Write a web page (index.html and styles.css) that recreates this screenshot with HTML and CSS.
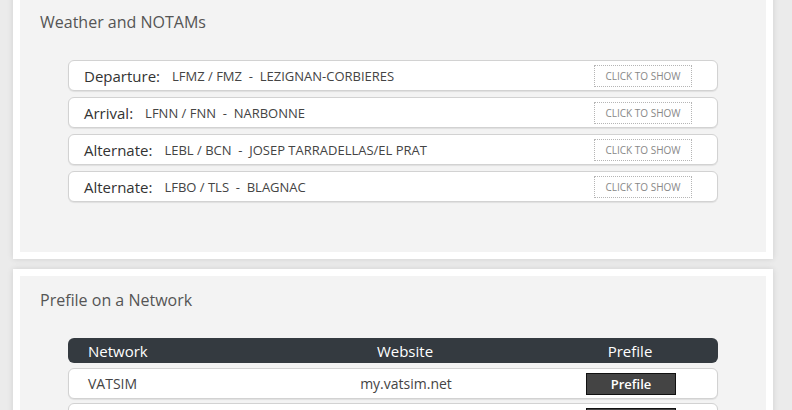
FILE: index.html
```html
<!DOCTYPE html>
<html lang="en">

<head>
    <meta charset="UTF-8">
    <title>Flight briefing</title>
    <link rel="stylesheet" href="styles.css">
</head>

<body>
    <!-- 天气和NOTAM -->
    <div class="card first">
        <h2 class="card-title">Weather and NOTAMs</h2>
        <ul class="airports">
            <li class="airport">
                <span class="role">Departure:</span>
                <span class="code">LFMZ / FMZ &nbsp;-&nbsp; LEZIGNAN-CORBIERES</span>
                <a href="javascript:;" class="show-btn">CLICK TO SHOW</a>
            </li>
            <li class="airport">
                <span class="role">Arrival:</span>
                <span class="code">LFNN / FNN &nbsp;-&nbsp; NARBONNE</span>
                <a href="javascript:;" class="show-btn">CLICK TO SHOW</a>
            </li>
            <li class="airport">
                <span class="role">Alternate:</span>
                <span class="code">LEBL / BCN &nbsp;-&nbsp; JOSEP TARRADELLAS/EL PRAT</span>
                <a href="javascript:;" class="show-btn">CLICK TO SHOW</a>
            </li>
            <li class="airport">
                <span class="role">Alternate:</span>
                <span class="code">LFBO / TLS &nbsp;-&nbsp; BLAGNAC</span>
                <a href="javascript:;" class="show-btn">CLICK TO SHOW</a>
            </li>
        </ul>
    </div>

    <!-- 网络预报 -->
    <div class="card">
        <h2 class="card-title">Prefile on a Network</h2>
        <div class="networks">
            <div class="net-row net-head">
                <div class="col-name">Network</div>
                <div class="col-site">Website</div>
                <div class="col-act">Prefile</div>
            </div>
            <div class="net-row">
                <div class="col-name">VATSIM</div>
                <div class="col-site">my.vatsim.net</div>
                <div class="col-act"><a href="javascript:;" class="prefile-btn">Prefile</a></div>
            </div>
            <div class="net-row">
                <div class="col-name">IVAO</div>
                <div class="col-site">fpl.ivao.aero</div>
                <div class="col-act"><a href="javascript:;" class="prefile-btn">Prefile</a></div>
            </div>
        </div>
    </div>
</body>

</html>
```

FILE: styles.css
```css
* {
    margin: 0;
    padding: 0;
    list-style-type: none;
    box-sizing: border-box;
}

body {
    background-color: #ebebeb;
    font-family: "Open Sans", "Liberation Sans", sans-serif;
    color: #333;
    overflow: hidden;
}

.card {
    width: 760px;
    margin: 10px 0 0 13px;
    border: 7px solid #fff;
    background-color: #f3f3f3;
    box-shadow: 0 0 6px rgba(0, 0, 0, 0.12);
    padding: 13px 20px 50px;
}

/* 页面是滚动过的 第一张卡片顶部被切掉 */
.card.first {
    margin-top: -9px;
}

.card-title {
    font-size: 16px;
    font-weight: normal;
    line-height: 22px;
    color: #555;
    margin-bottom: 27px;
}

.airports,
.networks {
    margin: 0 28px;
}

.airport {
    display: flex;
    align-items: center;
    height: 31px;
    margin-bottom: 6px;
    padding: 0 25px 0 15px;
    background-color: #fff;
    border: 1px solid #d2d2d2;
    border-radius: 6px;
    box-shadow: 0 1px 1px rgba(0, 0, 0, 0.08);
}

.airport:last-child {
    margin-bottom: 0;
}

.airport .role {
    font-size: 15px;
    color: #333;
    margin-right: 12px;
}

.airport .code {
    font-size: 13px;
    color: #444;
}

.show-btn {
    margin-left: auto;
    width: 98px;
    height: 22px;
    line-height: 20px;
    text-align: center;
    font-size: 10px;
    color: #888;
    text-decoration: none;
    border: 1px dotted #b5b5b5;
}

.net-row {
    display: grid;
    grid-template-columns: 200px 274px 176px;
    align-items: center;
    height: 31px;
    margin-bottom: 4px;
    background-color: #fff;
    border: 1px solid #d2d2d2;
    border-radius: 6px;
    box-shadow: 0 1px 1px rgba(0, 0, 0, 0.08);
    font-size: 14px;
    color: #444;
}

.net-row.net-head {
    height: 25px;
    margin-bottom: 5px;
    background-color: #343a40;
    border: none;
    border-radius: 6px;
    box-shadow: none;
    color: #fff;
    font-size: 15px;
}

.col-name {
    padding-left: 19px;
}

.col-site,
.col-act {
    text-align: center;
}

.net-head .col-name {
    padding-left: 20px;
}

.prefile-btn {
    display: inline-block;
    width: 90px;
    height: 22px;
    line-height: 20px;
    background-color: #444;
    border: 1px solid #111;
    color: #fff;
    font-size: 13px;
    font-weight: 600;
    text-decoration: none;
    vertical-align: middle;
}
```
